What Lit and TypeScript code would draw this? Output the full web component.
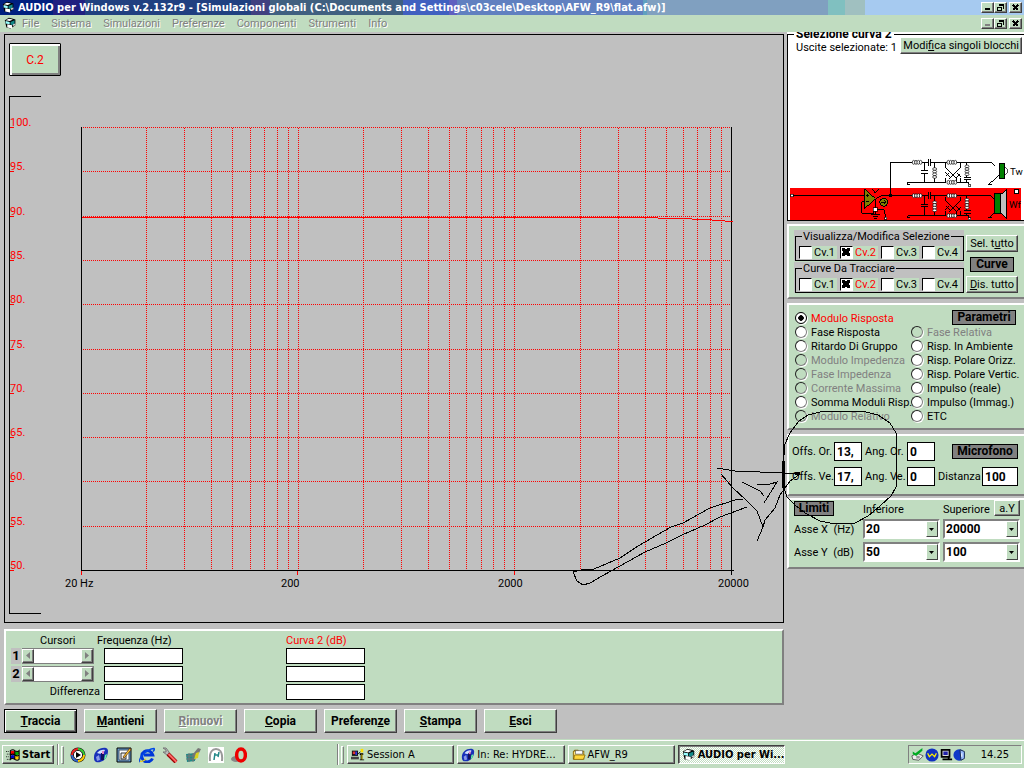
import { LitElement, html, svg, css } from "lit";
import { customElement, property } from "lit/decorators.js";
import { classMap } from "lit/directives/class-map.js";

const LEFT = 81;
const RIGHT = 731;
const TOP = 127;
const BOTTOM = 570;

const xOf = (f: number) => Math.round(LEFT + ((RIGHT - LEFT) * Math.log10(f / 20)) / 3) + 0.5;
const yOf = (db: number) => Math.round(BOTTOM - ((BOTTOM - TOP) * (db - 50)) / 50) + 0.5;

const appIcon = svg`
  <path d="M1 4l5-3 5 1 3 1v7l-6 4-5-1-1-4z" fill="#000"/>
  <path d="M2 4l4-2 5 1-4 2z" fill="#fff"/>
  <path d="M2 5l5 1v3l-5-1z" fill="#9ff"/>
  <path d="M4 9l6 1v4l-6-1z" fill="#fff"/>
  <path d="M8 6l5-2v4l-3 2-2-1z" fill="#188"/>
  <path d="M11 9l3-1v2l-3 1z" fill="#ccc"/>`;

const mailIcon = svg`
  <path d="M1 10C1 4 7 0 13 1c3 1 2 5 1 8-2 5-7 7-11 6-2-1-2-3-2-5z" fill="#1830b8"/>
  <path d="M4 6c2-3 6-4 8-3-1 3-4 5-8 3z" fill="#cfe0ff"/>
  <path d="M3 10l3-2 1 5-3 1z" fill="#8898e8"/>
  <path d="M8 6h3v7H8z" fill="#101060"/><path d="M9 4h2v3H9z" fill="#e080c0"/>
  <path d="M12 8l2-1-1 4-2 2z" fill="#6f9"/>`;

const folderIcon = svg`
  <path d="M1 4l2-2h4l1 1h6v10H1z" fill="#806000"/>
  <path d="M2 4h11v8H2z" fill="#ffe680"/><path d="M4 3h8v4H4z" fill="#fff" stroke="#555" stroke-width=".7"/>
  <path d="M3 8h12l-2 5H2z" fill="#ffd83c" stroke="#806000" stroke-width=".8"/>`;

const sessionIcon = svg`
  <path d="M1 3h7v6H1z" fill="#111"/><path d="M2 4h3v3H2z" fill="#d33"/><path d="M5 4h2v4H5z" fill="#33d"/>
  <path d="M0 10h9v3H0z" fill="#444"/><path d="M8 7l3-3" stroke="#000"/>
  <path d="M11 1h3v4h-3z" fill="#ffe000"/><path d="M10 6h4v2h-1v5h2v1h-5v-1h1V8h-1z" fill="#000"/><path d="M12 7h1v6h-1z" fill="#ffe000"/>`;

const quickIcons = [
  { name: "Media Player", art: svg`<circle cx="8" cy="8" r="7.5" fill="#111"/>
    <path d="M8 8V1a7 7 0 0 1 7 7z" fill="#3c3"/><path d="M8 8h7a7 7 0 0 1-7 7z" fill="#fc0"/>
    <path d="M8 8v7a7 7 0 0 1-7-7z" fill="#36c"/><path d="M8 8H1a7 7 0 0 1 7-7z" fill="#e22"/>
    <circle cx="8" cy="8" r="4.6" fill="#fff" stroke="#222"/><path d="M6 5l5 3-5 3z" fill="#000"/>` },
  { name: "Netscape", art: mailIcon },
  { name: "Desktop", art: svg`<path d="M1 1h14v14H1z" fill="#69c" stroke="#000"/><path d="M3 3h10v10H3z" fill="#fff" stroke="#456"/>
    <path d="M5 6h5v6H5z" fill="#eee" stroke="#333"/><path d="M7 10L14 1l1 2-7 8z" fill="#fc3" stroke="#520" stroke-width=".7"/>` },
  { name: "Internet Explorer", art: svg`<path d="M13.500 11.500A5.600 5.600 0 1 1 13.800 8H5" fill="none" stroke="#0038d8" stroke-width="3"/>
    <path d="M1 15C-1 12 7 2 15 1.500c1 1 0 2-1 3" fill="none" stroke="#0048e8" stroke-width="1.500"/>
    <path d="M1 14c1 1 4 0 6-2" stroke="#e8d020" stroke-width="1.200" fill="none"/>` },
  { name: "Strumenti", art: svg`<path d="M1 1l3 0 3 4 0 2-2 1-4-3 3 0 0-2z" fill="#bbb" stroke="#777"/>
    <path d="M6 7l8 8" stroke="#900" stroke-width="4"/><path d="M6.500 7l8 8" stroke="#f66" stroke-width="2"/>` },
  { name: "Rete", art: svg`<path d="M1 7l9-1v8l-8 1z" fill="#288"/><path d="M1 9h10M1 12h10M4 6v9M8 6v9" stroke="#777"/>
    <path d="M8 7l5-6 3 1-2 4-5 4z" fill="#777"/><path d="M11 6l3-1-1 6-4 1z" fill="#d8d020"/>` },
  { name: "Modem", art: svg`<path d="M0 0h16v16H0z" fill="#fff"/><path d="M2 14C1 4 5 2 8 2s7 2 6 12" fill="none" stroke="#999" stroke-width="2"/>
    <path d="M6 13l1-7M6 8h5M11 5l-1 5" fill="none" stroke="#288" stroke-width="1.500"/>` },
  { name: "Opera", art: svg`<ellipse cx="5" cy="12" rx="5" ry="3" fill="#888"/><ellipse cx="10" cy="8" rx="4.400" ry="6" fill="#bedbbe" stroke="#e00" stroke-width="3.500"/>` },
];

const trayIcons = [
  svg`<path d="M1 9l6-3 7 3-5 5-7-1z" fill="#eee" stroke="#555"/><path d="M2 4l3 2 8-6v3L6 9 2 7z" fill="#0a2"/><path d="M6 9h4v3H6z" fill="#999"/>`,
  svg`<circle cx="8" cy="8" r="7.500" fill="#1030c0"/><path d="M3 6l2 4 3-3 3 3 2-4" fill="none" stroke="#fe0" stroke-width="1.500"/>`,
  svg`<path d="M3 2h9v8H3z" fill="#ddd" stroke="#000" stroke-width="2"/><path d="M5 4h5v4H5z" fill="#22a"/><path d="M4 13h11M11 9v4" stroke="#000" stroke-width="2"/>`,
  svg`<circle cx="7" cy="8" r="6.500" fill="#1038c8"/><path d="M8 2l5 2v8l-4 2z" fill="#9bf" stroke="#124"/><path d="M10 6v4" stroke="#fff"/>`,
];

const icon = (art: unknown, cls = "icon") => html`<svg class=${cls} viewBox="0 0 16 16" aria-hidden="true">${art}</svg>`;

const base = css`
  * { box-sizing: border-box; }
  button, input, select { font: inherit; color: inherit; margin: 0; padding: 0; border-radius: 0; appearance: none; }
  button { white-space: nowrap; background: #c0dcc0; border: 1px solid; border-color: #fff #404040 #404040 #fff; box-shadow: inset -1px -1px #808080; }
  u { text-decoration: underline; text-underline-offset: 1px; }
`;

@customElement("window-buttons")
class WindowButtons extends LitElement {
  @property({ type: Boolean }) child = false;
  static styles = [base, css`
    :host { display: flex; margin-left: auto; padding-right: 2px; }
    button { width: 13px; height: 11px; display: grid; place-items: center; }
    .close { margin-left: 2px; }
    svg { width: 9px; height: 7px; fill: none; stroke: #000; shape-rendering: crispEdges; }
    .off { stroke: #808080; }
  `];
  render() {
    return html`
      <button aria-label="Riduci a icona"><svg class=${classMap({ off: this.child })} viewBox="0 0 9 7"><path d="M2 5h5" stroke-width="2"/></svg></button>
      <button aria-label="Ripristina"><svg viewBox="0 0 9 7"><path d="M3.500 2V1h4v3h-1M3 .5h5M1.500 3.500h4v3h-4zM1 3.500h5"/></svg></button>
      <button class="close" aria-label="Chiudi"><svg viewBox="0 0 9 7"><path d="M2 1l5 5M7 1L2 6" stroke-width="1.500"/></svg></button>`;
  }
}

@customElement("response-plot")
class ResponsePlot extends LitElement {
  static styles = [base, css`
    :host { display: block; border: 1px solid #000; padding-top: 8px; }
    .curve { display: block; margin: 0 0 0 4px; width: 52px; height: 33px; color: #f00; border: 1px solid #000; border-radius: 1px; box-shadow: inset 2px 2px #fff, inset -2px -2px #808080; font-size: 12px; }
    svg { display: block; width: 100%; shape-rendering: crispEdges; }
    .grid { stroke: #f00; stroke-dasharray: 1 1; fill: none; }
    .axis { stroke: #000; fill: none; }
    .red { stroke: #f00; fill: none; }
    .db { fill: #f00; font-size: 11px; }
    .hz { fill: #000; font-size: 11px; }
  `];
  render() {
    const freqs = [1, 10, 100].flatMap((d) => [2, 3, 4, 5, 6, 7, 8, 9, 10].map((k) => 20 * d * k)).filter((f) => f < 20000);
    const levels = [100, 95, 90, 85, 80, 75, 70, 65, 60, 55, 50];
    return html`
      <button class="curve">C.2</button>
      <svg viewBox="5 76 778 546" role="img" aria-label="Modulo risposta">
        <path class="axis" d="M41 96.500H9.500V613.500H41"/>
        ${levels.map((l) => svg`
          ${l > 50 ? svg`<path class="grid" d="M${LEFT} ${yOf(l)}H${RIGHT}"/>` : ""}
          <path class="red" d="M10 ${yOf(l)}h4"/>
          <text class="db" x="10" y=${yOf(l) - 1.5}>${l}.</text>`)}
        ${freqs.map((f) => svg`<path class="grid" d="M${xOf(f)} ${TOP + 1}V${BOTTOM}"/>`)}
        <path class="red" d="M81.500 571v4M297.500 571v4M514.500 571v4"/>
        <path class="axis" d="M81.500 127V570.500H734M731.500 127V575"/>
        <path class="red" d="M82 217.500H658M658 218.500H692M692 219.500H712M712 220.500H725M725 221.500H733"/>
        <text class="hz" x="65" y="587">20 Hz</text>
        <text class="hz" x="281" y="587">200</text>
        <text class="hz" x="498" y="587">2000</text>
        <text class="hz" x="718" y="587">20000</text>
      </svg>`;
  }
}

@customElement("crossover-circuit")
class CrossoverCircuit extends LitElement {
  static styles = css`
    :host { display: block; }
    svg { display: block; width: 100%; shape-rendering: crispEdges; }
    .w { fill: none; stroke: #000; stroke-width: 3; }
    .coil { fill: #fff; stroke: #000; stroke-width: 2; shape-rendering: auto; }
    .t { font-size: 29px; }
  `;
  private coilH(x: number, y: number) {
    return [0, 1, 2, 3].map((i) => svg`<ellipse class="coil" cx=${x + i * 7} cy=${y} rx="4" ry="6"/>`);
  }
  private coilV(x: number, y: number) {
    return [0, 1, 2, 3].map((i) => svg`<ellipse class="coil" cx=${x} cy=${y + i * 8} rx="6" ry="4"/>`);
  }
  private branch(y: number) {
    return svg`
      <path class="w" d="M320 ${y}H432M441 ${y}H621L632 ${y + 11}M434 ${y - 10}v20M441 ${y - 10}v20"/>
      <path class="w" d="M421 ${y}v26M421 ${y + 33}v26M411 ${y + 26}h20M411 ${y + 33}h20M452 ${y}v59"/>
      <path class="w" d="M372 ${y + 66}v-6H486M520 ${y + 60}h34v8M368 ${y + 66}h9"/>
      <path class="w" d="M549 ${y}v46M539 ${y + 46}h21M539 ${y + 53}h21M549 ${y + 53}v8"/>
      <path class="w" d="M484 ${y + 3}v12l34 34v10M530 ${y + 3}v12l-34 34M484 ${y + 42}l10-10M484 ${y + 30}l16 16M530 ${y + 44}l-12-12M518 ${y + 46}l12-12M484 ${y + 46}v14M530 ${y + 46}v14"/>
      <path class="w" d="M648 ${y + 36}l-30 27v5M612 ${y + 66}h11"/>
      ${this.coilH(389, y)}${this.coilH(493, y)}${this.coilH(493, y + 60)}
      ${this.coilV(452, y + 20)}${this.coilV(549, y + 12)}
      <rect x="553" y=${y + 66} width="7" height="7" fill="#fff" stroke="#000" stroke-width="2"/>`;
  }
  render() {
    return html`<svg viewBox="12 27 708 196" role="img" aria-label="Schema filtro">
      <rect x="18" y="126" width="693" height="96" fill="#f00"/>
      <path class="w" d="M23 149H242M275 159L293 149H320V49"/>
      <rect x="316" y="145" width="8" height="8"/>
      <rect x="20" y="145" width="7" height="7" fill="#fff" stroke="#000" stroke-width="2"/>
      <path d="M242 128V188L274 158z" fill="#808000" stroke="#000" stroke-width="3"/>
      <path class="w" d="M246 148h9M250 144v9M246 167h9M264 128l10 14 10-14M242 168h-9v34h36v-11M274 158v47M280 191h20l6 24M262 205h25M266 212h17M271 219h7"/>
      <rect x="268" y="185" width="12" height="11" fill="#fff" stroke="#000" stroke-width="2"/>
      <circle cx="299" cy="169" r="12" fill="#808000" stroke="#000" stroke-width="3"/>
      <path class="w" d="M291 169h15M300 163l6 6-6 6"/>
      <rect x="302" y="214" width="6" height="6" fill="#fff" stroke="#000" stroke-width="2"/>
      ${this.branch(49)}${this.branch(149)}
      <path d="M663 63q15 12 0 25z" fill="#fff" stroke="#000" stroke-width="2"/>
      <rect x="646" y="53" width="16" height="44" fill="#008000" stroke="#000" stroke-width="3"/>
      <path d="M650 146L668 130V217L650 201z" fill="#c0c0c0" stroke="#000" stroke-width="3"/>
      <rect x="632" y="143" width="18" height="61" fill="#008000" stroke="#000" stroke-width="3"/>
      <rect x="692" y="131" width="11" height="11" fill="#fff" stroke="#000" stroke-width="3"/>
      <text class="t" x="678" y="87">Tw</text><text class="t" x="675" y="185">Wf</text>
    </svg>`;
  }
}

@customElement("side-panels")
class SidePanels extends LitElement {
  static styles = [base, css`
    :host { display: flex; flex-direction: column; gap: 4px; font-size: 11px; line-height: 13px; white-space: nowrap; }
    .panel { background: #c0dcc0; border: 2px solid; border-color: #fff transparent #808080 #fff; border-right: 0; }
    .selection { background: #fff; overflow: clip; }
    .frame { margin: -4px 0 0; padding: 0; border: 1px solid #000; border-right: 0; min-width: 0; }
    .frame legend { margin-left: 6px; padding: 0 2px; font-weight: bold; font-size: 12px; line-height: 13px; }
    .head { display: flex; justify-content: space-between; padding: 0 2px 0 8px; height: 114px; align-items: flex-start; }
    .head button { height: 17px; padding: 0 2px; margin-top: -4px; }
    .badge { background: #808080; border: 1px solid #000; font-weight: bold; font-size: 12px; line-height: 13px; height: 15px; text-align: center; }
    .curves { display: grid; grid-template-columns: 170px 52px; gap: 2px; padding: 4px 0 4px 5px; margin-top: -1px; }
    .groups { display: grid; gap: 1px; }
    .group { background: #c0c0c0; padding: 0 0 0 1px; }
    .group fieldset { border: 1px solid #000; margin: 0; padding: 3px 3px 1px; min-width: 0; display: grid; grid-template-columns: repeat(4, 38px); gap: 3px; }
    .group legend { padding: 0 1px; margin-left: 3px; line-height: 13px; }
    .group label { display: flex; gap: 2px; align-items: center; height: 13px; background: #c0dcc0; }
    .on { color: #f00; }
    input[type="checkbox"] { flex: none; width: 13px; height: 13px; background: #fff; border: 1px solid; border-color: #000 #fff #fff #000; }
    input[type="checkbox"]:checked { background: #fff linear-gradient(45deg, transparent 36%, #000 36% 64%, transparent 64%) 1px 1px / 8px 8px no-repeat; position: relative; }
    input[type="checkbox"]:checked::after { content: ""; display: block; width: 8px; height: 8px; margin: 1px; background: linear-gradient(-45deg, transparent 36%, #000 36% 64%, transparent 64%); }
    .actions { display: flex; flex-direction: column; justify-content: space-between; align-items: center; padding-top: 5px; }
    .actions button { width: 52px; height: 17px; }
    .actions .badge { width: 44px; }
    .params { display: grid; grid-template-columns: 116px 1fr; padding: 6px 0 5px 6px; }
    .params > div { display: grid; grid-auto-rows: 14px; }
    .params label { display: flex; gap: 4px; align-items: center; }
    .params .badge { justify-self: end; margin-right: 8px; width: 64px; margin-top: -1px; }
    input[type="radio"] { flex: none; width: 12px; height: 12px; border-radius: 6px; background: #fff; border: 1px solid; border-color: #202020 #808080 #808080 #202020; box-shadow: 1px 1px #fff; }
    input[type="radio"]:checked { background: radial-gradient(circle, #000 0 2.5px, #fff 3px); border-color: #000; }
    .dim { color: #808080; }
    .dim input { background: #c0dcc0; }
    .mic { display: grid; grid-template-columns: 39px 28px 39px 28px 1fr; gap: 6px 3px; align-items: center; padding: 6px 6px 8px 3px; }
    .mic input { width: 28px; height: 19px; border: 1px solid #000; background: #fff; font-weight: bold; font-size: 12px; padding-left: 2px; }
    .mic .badge { justify-self: end; width: 66px; }
    .dist { display: flex; justify-content: space-between; align-items: center; }
    .dist input { width: 36px; }
    .limits { display: grid; grid-template-columns: 66px 77px 77px; gap: 3px; align-items: center; padding: 0 0 5px 5px; }
    .limits .badge, .limits .name { align-self: end; }
    .limits .badge { justify-self: start; width: 40px; }
    .limits .top { display: flex; justify-content: space-between; align-items: end; }
    .limits button { width: 26px; height: 16px; }
    .combo { position: relative; }
    .combo select { display: block; width: 100%; height: 20px; background: #fff; border: 2px solid; border-color: #808080 #fff #fff #808080; font-weight: bold; font-size: 12px; padding-left: 1px; }
    .combo svg { position: absolute; right: 2px; top: 2px; width: 12px; height: 16px; background: #c0dcc0; border: 1px solid; border-color: #fff #404040 #404040 #fff; pointer-events: none; }
    .panel + .limits { margin-top: -2px; }
  `];
  private group(title: string) {
    return html`<div class="group"><fieldset><legend>${title}</legend>
      ${[1, 2, 3, 4].map((n) => html`<label class=${classMap({ on: n === 2 })}><input type="checkbox" .checked=${n === 2}>Cv.${n}</label>`)}
    </fieldset></div>`;
  }
  private radio(text: string, dim = false, on = false) {
    return html`<label class=${classMap({ dim, on })}><input type="radio" name="param" .checked=${on} ?disabled=${dim}>${text}</label>`;
  }
  private combo(label: string, value: string) {
    return html`<div class="combo"><select aria-label=${label}><option>${value}</option></select>
      <svg viewBox="0 0 10 14" aria-hidden="true"><path d="M2 6h5L4.500 9z"/></svg></div>`;
  }
  render() {
    return html`
      <section class="selection">
        <fieldset class="frame"><legend>Selezione curva 2</legend>
          <div class="head"><span>Uscite selezionate: 1</span><button>Modi<u>f</u>ica singoli blocchi</button></div>
          <crossover-circuit></crossover-circuit>
        </fieldset>
      </section>
      <section class="panel curves">
        <div class="groups">${this.group("Visualizza/Modifica Selezione")}${this.group("Curve Da Tracciare")}</div>
        <div class="actions"><button>Sel. t<u>u</u>tto</button><span class="badge">Curve</span><button><u>D</u>is. tutto</button></div>
      </section>
      <section class="panel params">
        <div>
          ${this.radio("Modulo Risposta", false, true)}${this.radio("Fase Risposta")}${this.radio("Ritardo Di Gruppo")}
          ${this.radio("Modulo Impedenza", true)}${this.radio("Fase Impedenza", true)}${this.radio("Corrente Massima", true)}
          ${this.radio("Somma Moduli Risp.")}${this.radio("Modulo Relativo", true)}
        </div>
        <div>
          <span class="badge">Parametri</span>
          ${this.radio("Fase Relativa", true)}${this.radio("Risp. In Ambiente")}${this.radio("Risp. Polare Orizz.")}
          ${this.radio("Risp. Polare Vertic.")}${this.radio("Impulso (reale)")}${this.radio("Impulso (Immag.)")}${this.radio("ETC")}
        </div>
      </section>
      <section class="panel mic">
        <label for="oo">Offs. Or.</label><input id="oo" value="13,"><label for="ao">Ang. Or.</label><input id="ao" value="0">
        <span class="badge">Microfono</span>
        <label for="ov">Offs. Ve.</label><input id="ov" value="17,"><label for="av">Ang. Ve.</label><input id="av" value="0">
        <span class="dist"><label for="di">Distanza</label><input id="di" value="100"></span>
      </section>
      <section class="panel limits">
        <span class="badge">Limiti</span><span class="name">Inferiore</span><span class="top">Superiore<button>a.Y</button></span>
        <span>Asse X &nbsp;(Hz)</span>${this.combo("Asse X inferiore", "20")}${this.combo("Asse X superiore", "20000")}
        <span>Asse Y &nbsp;(dB)</span>${this.combo("Asse Y inferiore", "50")}${this.combo("Asse Y superiore", "100")}
      </section>`;
  }
}

@customElement("cursor-panel")
class CursorPanel extends LitElement {
  static styles = [base, css`
    :host { display: block; background: #c0dcc0; border: 2px solid; border-color: #fff #808080 #808080 #fff; padding: 3px 0 3px 5px; font-size: 11px; line-height: 14px; }
    .head { display: grid; grid-template-columns: 57px 189px auto; padding-left: 29px; }
    .red { color: #f00; }
    .rows { display: grid; grid-template-columns: 10px 81px 181px 79px; gap: 2px 1px; align-items: center; }
    .num { background: #c0c0c0; font-weight: bold; font-size: 13px; line-height: 16px; text-align: center; }
    .diff { grid-column: 1 / 3; text-align: right; padding-right: 3px; }
    input { width: 79px; height: 16px; border: 1px solid #000; background: #fff; }
    .scroll { display: flex; width: 72px; height: 16px; background: #fff; border: 1px solid #808080; border-left: 0; }
    .scroll button { width: 12px; height: 14px; display: grid; place-items: center; }
    .scroll i { flex: 1; }
    .scroll svg { width: 6px; height: 8px; fill: #808080; }
  `];
  private scroll() {
    return html`<div class="scroll"><button aria-label="Indietro"><svg viewBox="0 0 6 8"><path d="M5 0v7L1 3.500z"/></svg></button><i></i>
      <button aria-label="Avanti"><svg viewBox="0 0 6 8"><path d="M1 0v7l4-3.500z"/></svg></button></div>`;
  }
  render() {
    return html`
      <div class="head"><span>Cursori</span><span>Frequenza (Hz)</span><span class="red">Curva 2 (dB)</span></div>
      <div class="rows">
        ${[1, 2].map((n) => html`<span class="num">${n}</span>${this.scroll()}<input aria-label="Frequenza ${n}"><input aria-label="Curva ${n}">`)}
        <span class="diff">Differenza</span><input aria-label="Differenza frequenza"><input aria-label="Differenza curva">
      </div>`;
  }
}

@customElement("task-bar")
class TaskBar extends LitElement {
  static styles = [base, css`
    :host { display: flex; align-items: center; height: 29px; background: #c0dcc0; box-shadow: inset 0 1px #c0dcc0, inset 0 2px #fff; padding: 2px 2px 0; font-family: "DejaVu Sans Condensed", sans-serif; font-size: 11px; }
    button { height: 19px; display: flex; align-items: center; gap: 2px; padding: 0 3px; }
    .start { width: 52px; font-weight: bold; }
    .icon { width: 14px; height: 14px; flex: none; }
    .quick { display: flex; gap: 7px; margin-left: 6px; flex: 0 0 264px; }
    .quick a { width: 16px; height: 16px; }
    .quick svg { width: 16px; height: 16px; display: block; }
    .sep { width: 2px; height: 21px; border-left: 1px solid #808080; border-right: 1px solid #fff; margin-left: 3px; }
    .grip { width: 3px; height: 18px; border: 1px solid; border-color: #fff #808080 #808080 #fff; margin-left: 2px; }
    .tasks { display: flex; gap: 3px; margin-left: 3px; flex: 0 1 438px; min-width: 0; }
    .tasks button { flex: 1; min-width: 0; overflow: hidden; }
    .tasks .active { font-weight: bold; border-color: #404040 #fff #fff #404040; box-shadow: inset 1px 1px #808080; background: repeating-conic-gradient(#fff 0 25%, #c0dcc0 0 50%) 0 0 / 2px 2px; }
    .tray { margin-left: auto; width: 114px; height: 19px; display: flex; align-items: center; border: 1px solid; border-color: #808080 #fff #fff #808080; padding: 0 12px 0 2px; }
    time { margin-left: auto; }
  `];
  render() {
    return html`
      <button class="start">${icon(svg`<path d="M5 4q3-2 5 0v4q-2-2-5 0z" fill="#e00"/><path d="M10 4q3 1 5-1v4q-2 2-5 1z" fill="#0a0"/><path d="M5 9q3-2 5 0v4q-2-2-5 0z" fill="#00c"/><path d="M10 9q3 1 5-1v4q-2 2-5 1z" fill="#fc0"/><path d="M5 3q3-2 5 0 3 2 5 0v10q-2 2-5 0-3-2-5 0zM10 3v10M5 8q3-2 5 0 3 2 5 0" fill="none" stroke="#000" stroke-width="1.200"/><path d="M0 4h4M1 7h3M0 10h4M1 13h3" stroke="#000" stroke-dasharray="1 1"/>`)}Start</button>
      <span class="sep"></span><span class="grip"></span>
      <nav class="quick">${quickIcons.map((q) => html`<a href="#" aria-label=${q.name}>${icon(q.art)}</a>`)}</nav>
      <span class="sep"></span><span class="grip"></span>
      <div class="tasks">
        <button>${icon(sessionIcon)}Session A</button>
        <button>${icon(mailIcon)}In: Re: HYDRE...</button>
        <button>${icon(folderIcon)}AFW_R9</button>
        <button class="active">${icon(appIcon)}AUDIO per Wi...</button>
      </div>
      <div class="tray">${trayIcons.map((t) => icon(t))}<time>14.25</time></div>`;
  }
}

@customElement("app-root")
class AppRoot extends LitElement {
  static styles = [base, css`
    :host { display: flex; flex-direction: column; position: relative; min-height: 100vh; background: #c0c0c0; color: #000; font-family: Roboto, "Liberation Sans", Arial, sans-serif; font-size: 11px; }
    .title { display: flex; align-items: center; gap: 3px; height: 15px; padding-left: 2px; color: #fff; font: bold 11px/15px "DejaVu Sans Condensed", sans-serif; white-space: nowrap;
      background: linear-gradient(90deg, #002080 0 5.2%, #202080 5.2% 8.3%, #204080 8.3% 24.5%, #404080 24.5% 26.4%, #406080 26.4% 39.4%, #4060c0 39.4% 43.8%, #6060c0 43.8% 44.6%, #6080c0 44.6% 62.8%, #60a0c0 62.8% 63.2%, #80a0c0 63.2% 80.9%, #80c0c0 80.9% 82.5%, #a0c0c0 82.5% 84.5%, #a6caf0 84.5%); }
    .menu { display: flex; align-items: center; height: 17px; padding-left: 4px; background: #c0dcc0; color: #808080; text-shadow: 1px 1px #fff; font-size: 11px; line-height: 17px; }
    .menu nav { display: flex; gap: 12px; margin-left: 5px; }
    .menu a { color: inherit; text-decoration: none; }
    .icon { width: 13px; height: 13px; flex: none; }
    .work { display: grid; grid-template-columns: minmax(0, 1fr) 237px; gap: 3px; flex: 1; }
    .main { padding: 2px 0 0 4px; display: flex; flex-direction: column; gap: 6px; }
    .buttons { display: flex; gap: 7px; margin-top: -2px; }
    .buttons button { width: 73px; height: 24px; font-weight: bold; font-size: 12px; }
    .buttons .default { border-color: #000; box-shadow: inset 1px 1px #fff, inset -1px -1px #404040, inset -2px -2px #808080; }
    .buttons button:disabled { color: #808080; text-shadow: 1px 1px #fff; }
    .pen { position: absolute; inset: 0 auto auto 0; width: 100%; pointer-events: none; fill: none; stroke: #000; shape-rendering: crispEdges; }
  `];
  render() {
    return html`
      <header class="title">${icon(appIcon)}<span>AUDIO per Windows v.2.132r9 - [Simulazioni globali (C:\\Documents and Settings\\c03cele\\Desktop\\AFW_R9\\flat.afw)]</span><window-buttons></window-buttons></header>
      <div class="menu">${icon(appIcon)}
        <nav>${["File", "Sistema", "Simulazioni", "Preferenze", "Componenti", "Strumenti", "Info"].map((m) => html`<a href="#">${m}</a>`)}</nav>
        <window-buttons child></window-buttons>
      </div>
      <div class="work">
        <main class="main">
          <response-plot></response-plot>
          <cursor-panel></cursor-panel>
          <div class="buttons">
            <button class="default"><u>T</u>raccia</button><button><u>M</u>antieni</button><button disabled><u>R</u>imuovi</button>
            <button><u>C</u>opia</button><button>Preferen<u>z</u>e</button><button><u>S</u>tampa</button><button><u>E</u>sci</button>
          </div>
        </main>
        <side-panels></side-panels>
      </div>
      <task-bar></task-bar>
      <svg class="pen" viewBox="0 0 1024 768" aria-hidden="true">
        <path d="M573 572L581 570 594 569 620 558 638 546 671 527 683 523 710 508 735 500 743 499"/>
        <path d="M573 572L577 581 583 585 590 583 602 576 620 566 645 552 666 543 682 535 705 525 720 517 747 507"/>
        <path d="M717 468L735 471 784 473 800 473M721 474L733 488 746 500 757 511 763 527"/>
        <path d="M800 474L790 481 780 495 775 508 765 520 763 527 757 541M742 482L754 488 760 491 764 496M757 485L770 484 777 482 764 503"/>
        <path d="M784 455V446L790 433 799 421 808 415 820 412 840 411H862L878 415 890 423 896 433V487L891 496 880 506 868 516 855 523 835 524 820 521 805 513 795 505 787 497 784 488"/>
        <path d="M783 461V488M795 473h5" stroke-width="3"/>
      </svg>`;
  }
}
